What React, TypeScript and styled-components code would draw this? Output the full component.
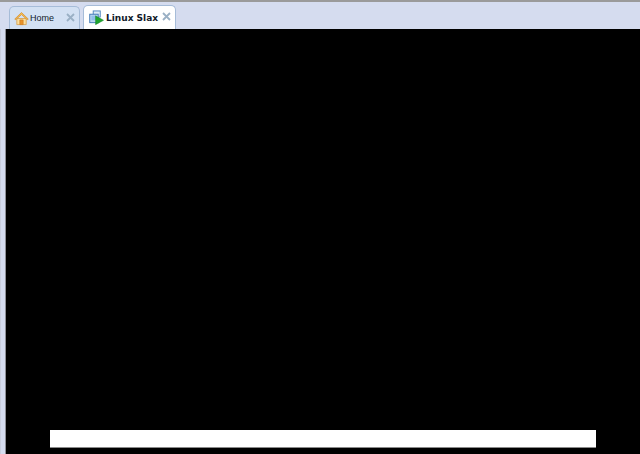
import styled, { createGlobalStyle } from 'styled-components';

const GlobalStyle = createGlobalStyle`
  html, body {
    margin: 0;
    padding: 0;
    background: #d5dcef;
  }
  * {
    box-sizing: border-box;
  }
`;

const Window = styled.div`
  width: 640px;
  height: 454px;
  display: flex;
  flex-direction: column;
  overflow: hidden;
  background: #d5dcef;
  border-top: 2px solid #9a9a9a;
  font-family: 'Liberation Sans', Arial, sans-serif;
`;

const TabBar = styled.div`
  height: 27px;
  flex: none;
  display: flex;
  align-items: flex-end;
  gap: 3px;
  padding-left: 9px;
`;

const Tab = styled.div<{ $active?: boolean }>`
  height: ${({ $active }) => ($active ? 24 : 23)}px;
  width: ${({ $active }) => ($active ? 93 : 71)}px;
  display: flex;
  align-items: center;
  gap: ${({ $active }) => ($active ? 2 : 1)}px;
  padding: 0 4px 0 ${({ $active }) => ($active ? 5 : 4)}px;
  background: ${({ $active }) => ($active ? '#ffffff' : '#d3e1f3')};
  border: 1px solid #a6bcd8;
  border-bottom: none;
  border-radius: 5px 5px 0 0;
  font-family: ${({ $active }) =>
    $active ? "'DejaVu Sans', Verdana, sans-serif" : "'Liberation Sans', Arial, sans-serif"};
  font-size: 9px;
  font-weight: ${({ $active }) => ($active ? 700 : 400)};
  color: #111a2a;
`;

const TabLabel = styled.span`
  flex: 1;
  white-space: nowrap;
`;

const Close = styled.svg`
  flex: none;
  width: 9px;
  height: 9px;
  margin-bottom: 2px;
`;

const Body = styled.div`
  flex: 1;
  display: flex;
  border-left: 1px solid #c9cedd;
`;

const Gutter = styled.div`
  width: 5px;
  flex: none;
  background: #d5dcef;
  border-right: 1px solid #8d8f96;
`;

const Screen = styled.div`
  flex: 1;
  background: #000000;
  display: flex;
  flex-direction: column;
  justify-content: flex-end;
  padding: 0 0 6px 44px;
`;

const InputBar = styled.div`
  width: 546px;
  height: 18px;
  background: #ffffff;
  border-bottom: 1px solid #8a8a8a;
`;

const HomeIcon = () => (
  <svg width="15" height="15" viewBox="0 0 16 16" style={{ flex: 'none' }}>
    <path d="M3 8h10v6.5H3z" fill="#fbdf9c" stroke="#d9a75a" strokeWidth="1" />
    <path d="M6.2 9.5h3.6v5H6.2z" fill="#e8932a" stroke="#c9781f" strokeWidth="0.6" />
    <path d="M0.8 8.6 8 1.6l7.2 7-1.2 0.6L8 3.8 2 9.2z" fill="#f6bf52" stroke="#d38f35" strokeWidth="0.8" strokeLinejoin="round" />
  </svg>
);

const VmIcon = () => (
  <svg width="15" height="15" viewBox="0 0 16 16" style={{ flex: 'none' }}>
    <rect x="4.5" y="1" width="7.5" height="6.5" fill="#dcebf8" stroke="#4f86c0" />
    <rect x="0.8" y="4.5" width="9" height="9" fill="#bcd8f2" stroke="#3f78b5" />
    <rect x="2.5" y="6" width="5.5" height="5" fill="#8fc0ea" />
    <path d="M7 6.2 15.5 11 7 15.6z" fill="#1fa52f" stroke="#148022" strokeWidth="0.5" />
  </svg>
);

const CloseIcon = () => (
  <Close viewBox="0 0 9 9">
    <path d="M1 1l7 7M8 1 1 8" stroke="#9ab0c5" strokeWidth="1.8" />
  </Close>
);

export default function App() {
  return (
    <>
      <GlobalStyle />
      <Window>
        <TabBar>
          <Tab>
            <HomeIcon />
            <TabLabel>Home</TabLabel>
            <CloseIcon />
          </Tab>
          <Tab $active>
            <VmIcon />
            <TabLabel>Linux Slax</TabLabel>
            <CloseIcon />
          </Tab>
        </TabBar>
        <Body>
          <Gutter />
          <Screen>
            <InputBar />
          </Screen>
        </Body>
      </Window>
    </>
  );
}
